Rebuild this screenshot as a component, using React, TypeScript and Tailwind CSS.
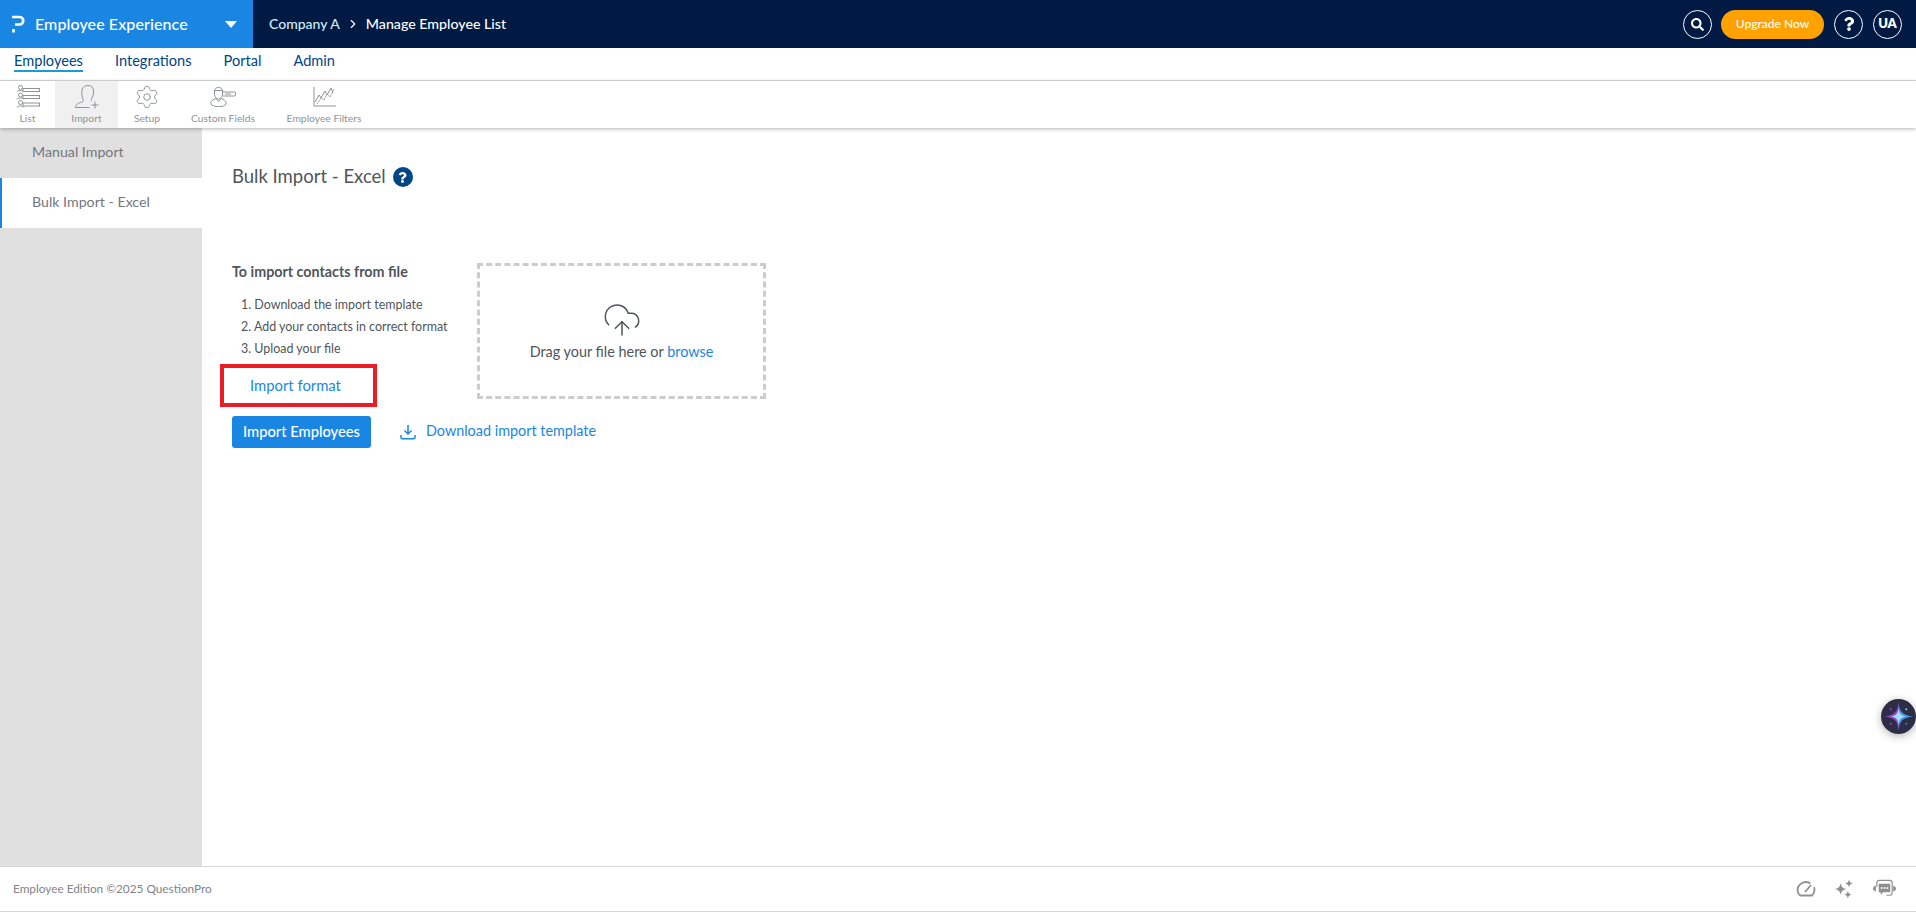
import React from 'react';
import { ChevronRight, CloudUpload, Settings } from 'lucide-react';
import { FaSearch, FaQuestion } from 'react-icons/fa';

const ListIcon = () => (
  <svg width="24" height="24" viewBox="0 0 24 24" fill="none" stroke="#8f9398" strokeWidth="1">
    <circle cx="4.500" cy="2.500" r="2" />
    <path d="M1 7c.5-2 6-2 7 0" />
    <rect x="7" y="3.500" width="16.500" height="3" />
    <circle cx="4.500" cy="10" r="2" />
    <path d="M1 14.500c.5-2 6-2 7 0" />
    <rect x="7" y="10.500" width="16.500" height="3" />
    <circle cx="4.500" cy="17.500" r="2" />
    <path d="M1 22.500c.5-2 6-2 7 0" />
    <rect x="7" y="18" width="16.500" height="3" />
  </svg>
);

const ImportIcon = () => (
  <svg width="24" height="24" viewBox="0 0 24 24" fill="none" stroke="#8f9398" strokeWidth="1">
    <path d="M.5 22.500c0-3 3-4.500 6.500-5.500 1.500-.5 1.500-2 1-3C7 12 6.500 8.500 7 5c.5-3 3-4.500 6-4.500 3.500 0 5.500 2 5.500 5.500 0 3-.5 5.500-2 7.500-.5 1-.5 2 .5 2.500M.5 22.500h14" />
    <path d="M20 16.500v7M16.500 20h7" />
  </svg>
);

const CustomFieldsIcon = () => (
  <svg width="26" height="20" viewBox="0 0 26 20" fill="none" stroke="#8f9398" strokeWidth="1">
    <path d="M4.500 4c0-2.500 2-3.500 4-3.500s4 1 4 3.500v3.500c0 2.500-2 4.500-4 4.500s-4-2-4-4.500z" />
    <path d="M4.500 3.500h8" />
    <path d="M1 17c-1-3 2.500-4.500 5-5.500l2.500 3 2.500-3c2.500 1 6 2.500 5 5.500-1 3.500-14 3.500-15 0z" />
    <rect x="12.500" y="5" width="13" height="4" rx="1" />
    <path d="M15 7h6" stroke="#b5b8bc" strokeWidth="1.500" />
  </svg>
);

const FiltersIcon = () => (
  <svg width="24" height="20" viewBox="0 0 24 20" fill="none" stroke="#8f9398" strokeWidth="1">
    <path d="M2 0v19h22" />
    <path d="M3 15l4-7 2 3 4-7 2 4 4-7 2 5" />
    <path d="M5 17l4-6 3 2 3-6 3 3 4-8" strokeWidth=".7" />
  </svg>
);

const AiBadge = () => (
  <svg width="35" height="35" viewBox="0 0 34 34">
    <circle cx="17" cy="17" r="17" fill="#2d2d44" />
    <path d="M17 3c.5 9 3.500 13 14 14-10.500 1-13.500 5-14 14-.5-9-3.500-13-14-14 10.500-1 13.500-5 14-14z" fill="#9a3fd0" />
    <path d="M17 3c.5 9 3.500 13 14 14-10.500 1-13.500 5-14 14z" fill="#3b9be8" />
    <path d="M17 9c.4 4.500 2 7 7 8-5 1-6.600 3.500-7 8-.4-4.500-2-7-7-8 5-1 6.600-3.500 7-8z" fill="#a8dcff" />
    <circle cx="9.500" cy="10" r="1" fill="#a040d0" />
    <circle cx="24.500" cy="10" r="1" fill="#6fe0e8" />
    <circle cx="9.500" cy="24" r="1" fill="#a040d0" />
    <circle cx="24.500" cy="24" r="1" fill="#3f7cc8" />
  </svg>
);

const GaugeIcon = () => (
  <svg width="20" height="18" viewBox="0 0 20 18" fill="none" stroke="#8f8f8f" strokeWidth="1.800">
    <path d="M4 15.500h12c1.500-1.500 2.500-3.500 2.500-5.500 0-1-.2-2-.6-2.800M14.500 3.500C13 2.500 11.500 2 10 2 5.500 2 1.500 5.500 1.500 10c0 2 .8 4 2.500 5.500" />
    <path d="M9 12l6-7" />
  </svg>
);

const SparkleIcon = () => (
  <svg width="20" height="20" viewBox="0 0 18 18" fill="#8f8f8f">
    <path d="M6 3.500c.6 3.500 2 5 5.500 5.500C8 9.500 6.600 11 6 14.500 5.400 11 4 9.500.5 9 4 8.500 5.400 7 6 3.500z" />
    <path d="M13.500.5c.4 2.200 1.300 3 3.500 3.500-2.200.5-3.100 1.300-3.500 3.500-.4-2.200-1.300-3-3.500-3.500 2.200-.5 3.100-1.300 3.500-3.500z" />
    <path d="M12.500 10.500c.4 2.200 1.300 3 3.500 3.500-2.200.5-3.100 1.300-3.500 3.500-.4-2.200-1.300-3-3.500-3.500 2.200-.5 3.100-1.300 3.500-3.500z" />
  </svg>
);

const SupportIcon = () => (
  <svg width="25" height="20" viewBox="0 0 26 20" fill="none">
    <path d="M5 8V3.500C5 2 6 1 7.500 1h11C20 1 21 2 21 3.500V14c0 1.500-1 2.500-2.500 2.500H15" stroke="#8f8f8f" strokeWidth="1.200" />
    <path d="M7 4.500h12v9h-7.500L9 16v-2.500H7z" fill="#8f8f8f" />
    <circle cx="10" cy="9" r="1" fill="#fff" />
    <circle cx="13" cy="9" r="1" fill="#fff" />
    <circle cx="16" cy="9" r="1" fill="#fff" />
    <path d="M4 6.500C2 7 1 8 1 9.500S2 12 4 12.500zM22 6.500c2 .5 3 1.500 3 3s-1 2.500-3 3z" fill="#8f8f8f" />
  </svg>
);

const tabs = ['Integrations', 'Portal', 'Admin'];

const tools = [
  { label: 'List', icon: <ListIcon />, width: 'w-[55px]' },
  { label: 'Import', icon: <ImportIcon />, width: 'w-[63px]', active: true },
  { label: 'Setup', icon: <Settings size={26} strokeWidth={0.9} color="#8f9398" />, width: 'w-[58px]' },
  { label: 'Custom Fields', icon: <CustomFieldsIcon />, width: 'w-[94px]' },
  { label: 'Employee Filters', icon: <FiltersIcon />, width: 'w-[108px]' },
];

export default function App() {
  return (
    <div className="relative flex h-[912px] w-full flex-col overflow-hidden bg-white font-['Lato','Noto_Sans',sans-serif]">
      {/* top bar */}
      <header className="flex h-12 shrink-0 items-center bg-[#001a43]">
        <div className="flex h-full w-[253px] items-center bg-[#1a86e4] pl-3 pr-[16px] text-white">
          <svg width="13" height="18" viewBox="0 0 13 18" fill="none" stroke="#fff" strokeWidth="2.600">
            <path d="M0 2h7.500c5 0 5 7.500 0 7.500H3" />
            <path d="M1.500 14v3.500" />
          </svg>
          <span className="ml-[10px] text-[16px] font-medium tracking-[0.1px]">Employee Experience</span>
          <svg className="ml-auto" width="12" height="7" viewBox="0 0 12 7" fill="#fff">
            <path d="M0 0h12L6 7z" />
          </svg>
        </div>
        <div className="ml-4 flex items-center text-[14px] font-medium text-[#cfeefa]">
          Company A
          <ChevronRight size={14} strokeWidth={2} className="ml-[6px] mr-[6px] text-white" />
          <span className="text-[14.2px] text-white">Manage Employee List</span>
        </div>
        <div className="ml-auto flex items-center pr-[14px]">
          <button className="flex h-[29px] w-[29px] items-center justify-center rounded-full border border-white text-white">
            <FaSearch size={13} />
          </button>
          <button className="ml-[9px] flex h-[29px] w-[103px] items-center justify-center rounded-full bg-[#ffa200] text-[12px] font-medium text-white">
            Upgrade Now
          </button>
          <button className="ml-[10px] flex h-[29px] w-[29px] items-center justify-center rounded-full border border-white text-white">
            <FaQuestion size={14} />
          </button>
          <button className="ml-[10px] flex h-[29px] w-[29px] items-center justify-center rounded-full border border-white text-[13px] font-extrabold text-white">
            UA
          </button>
        </div>
      </header>

      {/* module tabs */}
      <nav className="flex h-[33px] shrink-0 items-start gap-8 border-b border-[#dcdcdc] px-[14px] pt-1 text-[14.600px] text-[#004586]">
        <span className="border-b-2 border-[#1a9ad6] leading-[18px]">Employees</span>
        {tabs.map((tab) => (
          <span key={tab} className="leading-[18px]">{tab}</span>
        ))}
      </nav>

      {/* sub toolbar */}
      <div className="z-10 flex h-[47px] shrink-0 bg-white shadow-[0_1px_4px_rgba(0,0,0,0.3)]">
        {tools.map((tool) => (
          <div
            key={tool.label}
            className={`flex flex-col items-center pt-[2px] ${tool.width} ${tool.active ? 'bg-[#f0f0f0]' : ''}`}
          >
            <div className="flex h-[27px] items-center">{tool.icon}</div>
            <span className="text-[10.300px] leading-[16px] text-[#8f9398]">{tool.label}</span>
          </div>
        ))}
      </div>

      <div className="flex min-h-0 flex-1">
        {/* side menu */}
        <aside className="w-[202px] shrink-0 bg-[#e0e0e0] text-[14.200px] text-[#73777d]">
          <div className="flex h-[50px] items-center pb-[3px] pl-8">Manual Import</div>
          <div className="flex h-[50px] items-center border-l-2 border-[#1a86e4] bg-white pb-[3px] pl-[30px]">
            Bulk Import - Excel
          </div>
        </aside>

        {/* main content */}
        <main className="flex-1 pl-[30px] pt-[36px]">
          <div className="flex h-[26px] items-center text-[18.500px] text-[#50555c]">
            Bulk Import - Excel
            <span className="ml-[7px] flex h-5 w-5 items-center justify-center rounded-full bg-[#004586] text-white">
              <FaQuestion size={11} />
            </span>
          </div>

          <div className="mt-[73px] flex">
            <div className="w-[245px]">
              <p className="text-[14.300px] font-bold leading-[18px] text-[#50555c]">To import contacts from file</p>
              <ol className="mt-[13px] pl-[9px] text-[12.450px] leading-[22px] text-[#50555c]">
                <li>1. Download the import template</li>
                <li>2. Add your contacts in correct format</li>
                <li>3. Upload your file</li>
              </ol>
            </div>
            <div className="flex h-[136px] w-[289px] flex-col items-center justify-center border-[3px] border-dashed border-[#cccccc]">
              <CloudUpload size={40} strokeWidth={0.9} color="#50555c" />
              <p className="mt-[1px] text-[14.400px] text-[#50555c]">
                Drag your file here or <span className="text-[#1a86e4]">browse</span>
              </p>
            </div>
          </div>

          <div className="-ml-[12px] -mt-[35px] flex h-[43px] w-[157px] items-center justify-center border-4 border-[#ed1c24] pb-[1px] pr-[6px] text-[14.800px] text-[#1a86e4]">
            Import format
          </div>

          <div className="mt-[9px] flex items-center">
            <button className="h-8 w-[139px] rounded-[3px] bg-[#1a86e4] pb-[2px] text-[14.700px] font-medium text-white">
              Import Employees
            </button>
            <svg className="ml-[29px] mb-[1px]" width="16" height="16" viewBox="0 0 16 16" fill="none" stroke="#1a86e4" strokeWidth="1.500">
              <path d="M8 1v9M4.500 6.500L8 10l3.500-3.500" />
              <path d="M1 11v2.500c0 .8.500 1.200 1.200 1.200h11.600c.7 0 1.200-.4 1.200-1.200V11" />
            </svg>
            <span className="ml-[10px] mb-[2px] text-[14.400px] text-[#1a86e4]">Download import template</span>
          </div>
        </main>
      </div>

      <footer className="flex h-[46px] shrink-0 items-center border-y border-[#d9d6d3] pb-[1px] pl-[13px] pr-[19px] text-[11.800px] text-[#80858c]">
        Employee Edition ©2025 QuestionPro
        <div className="ml-auto flex items-center gap-[18px]">
          <GaugeIcon />
          <SparkleIcon />
          <SupportIcon />
        </div>
      </footer>

      <div className="absolute left-[1881px] top-[699px] rounded-full shadow-[0_2px_8px_rgba(0,0,0,0.3)]">
        <AiBadge />
      </div>
    </div>
  );
}
